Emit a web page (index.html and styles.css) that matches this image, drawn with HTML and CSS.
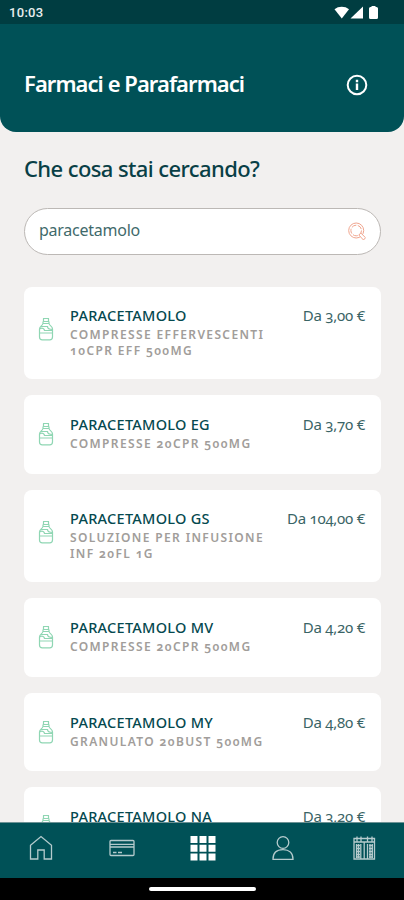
FILE: index.html
```html
<!DOCTYPE html>
<html lang="it">
<head>
<meta charset="utf-8">
<meta name="viewport" content="width=device-width, initial-scale=1">
<title>Farmaci e Parafarmaci</title>
<link rel="stylesheet" href="styles.css">
</head>
<body>
<svg width="0" height="0" class="defs" aria-hidden="true">
  <symbol id="bottle" viewBox="0 0 16 24">
    <path d="M5 1.500h6M5.500 1.500v3h5v-3M4.500 6.500h7M5 4.500v2C4.500 9 1.500 9 1.500 12v8c0 1.800 1 2.800 2.800 2.800h7.400c1.800 0 2.800-1 2.800-2.800v-8c0-3-3-3-3.500-5.500v-2M1.500 12c3-2 5 0 5 1.500h8M1.500 16h13M2.500 9.500h7c0 2 2 3 5 3"/>
  </symbol>
</svg>
<div class="phone">
  <div class="status">
    <span class="clock">10:03</span>
    <svg class="signals" width="46" height="16" viewBox="0 0 46 16" fill="#fff">
      <path d="M.5 4.200C4.500.9 11 .9 15 4.200L7.800 13.500z"/>
      <path d="M29 1.500v12H16.500z"/>
      <path d="M37.500 2v-1h4v1h1q1.500 0 1.500 1.500v9q0 1.500-1.500 1.500h-6q-1.500 0-1.500-1.500v-9q0-1.500 1.500-1.500z"/>
    </svg>
  </div>
  <header class="header">
    <h1>Farmaci e Parafarmaci</h1>
    <svg class="info" width="22" height="22" viewBox="0 0 22 22" fill="none" stroke="#fff">
      <circle cx="11" cy="11" r="9.300" stroke-width="2"/>
      <path d="M11 9.500v6.500M11 5.800v2.400" stroke-width="2.400"/>
    </svg>
  </header>
  <main class="content">
    <h2>Che cosa stai cercando?</h2>
    <div class="search">
      <span>paracetamolo</span>
      <svg width="18" height="19" viewBox="0 0 18 19" fill="none" stroke="#f0a58e" stroke-width="1">
        <circle cx="8.200" cy="8.500" r="7.500"/>
        <circle cx="8.200" cy="8.500" r="5.300" stroke-dasharray="5 1.500"/>
        <path d="M10.800 13l2-2 4.700 4.700-2 2.300z" fill="#fff"/>
      </svg>
    </div>
    <ul class="list">
      <li class="card tall"><svg class="bottle"><use href="#bottle"/></svg><div class="text"><h3>PARACETAMOLO</h3><p>COMPRESSE EFFERVESCENTI<br>10CPR EFF 500MG</p></div><span class="price">Da 3,00 €</span></li>
      <li class="card"><svg class="bottle"><use href="#bottle"/></svg><div class="text"><h3>PARACETAMOLO EG</h3><p>COMPRESSE 20CPR 500MG</p></div><span class="price">Da 3,70 €</span></li>
      <li class="card tall"><svg class="bottle"><use href="#bottle"/></svg><div class="text"><h3>PARACETAMOLO GS</h3><p>SOLUZIONE PER INFUSIONE<br>INF 20FL 1G</p></div><span class="price">Da 104,00 €</span></li>
      <li class="card"><svg class="bottle"><use href="#bottle"/></svg><div class="text"><h3>PARACETAMOLO MV</h3><p>COMPRESSE 20CPR 500MG</p></div><span class="price">Da 4,20 €</span></li>
      <li class="card"><svg class="bottle"><use href="#bottle"/></svg><div class="text"><h3>PARACETAMOLO MY</h3><p>GRANULATO 20BUST 500MG</p></div><span class="price">Da 4,80 €</span></li>
      <li class="card"><svg class="bottle"><use href="#bottle"/></svg><div class="text"><h3>PARACETAMOLO NA</h3></div><span class="price">Da 3,20 €</span></li>
    </ul>
  </main>
  <nav class="tabs">
    <svg width="26" height="26" viewBox="0 0 26 26"><path d="M2.500 24V10.200L13 1.500l10.500 8.700V24h-7.300v-9H9.800v9z"/></svg>
    <svg width="26" height="26" viewBox="0 0 26 26"><rect x="1" y="5.500" width="24" height="15" rx="1"/><path d="M1 9.300h24M1 12h24M4 17.500h3.500M9 17.500h4"/></svg>
    <svg class="grid" width="26" height="26" viewBox="0 0 26 26"><path d="M.5 1h7v7h-7zM9.500 1h7v7h-7zM18.500 1h7v7h-7zM.5 9.700h7v7h-7zM9.500 9.700h7v7h-7zM18.500 9.700h7v7h-7zM.5 18.400h7v7h-7zM9.500 18.400h7v7h-7zM18.500 18.400h7v7h-7z"/></svg>
    <svg width="26" height="26" viewBox="0 0 26 26"><circle cx="13" cy="7.500" r="5.800"/><path d="M3 24.300c0-6.500 4-9.600 10-9.600s10 3.100 10 9.600z"/></svg>
    <svg width="26" height="26" viewBox="0 0 26 26"><path d="M3 3.500h20.500V24H3zM3 7h20.500M6 1.500v5M10 1.500v5M16.500 1.500v5M21 1.500v5M9.800 9v15M13.200 7v17M16.500 9v15"/><path d="M5 10.500h4M5 13.500h4M5 16.500h4M5 19.500h4M5 22h4M18 10.500h4M18 13.500h4M18 16.500h4M18 19.500h4M18 22h4M5.500 9v14M7.500 9v14M19 9v14M21.300 9v14"/></svg>
  </nav>
  <div class="gesture"><i></i></div>
</div>
</body>
</html>
```
FILE: styles.css
```css
* { box-sizing: border-box; margin: 0; padding: 0; }
body { background: #f2f0ef; font-family: "Noto Sans", sans-serif; color: #05494f; overflow: hidden; }
.defs { display: none; }
.phone { height: 900px; display: flex; flex-direction: column; overflow: hidden; }
.status { height: 24px; flex: none; background: #003d41; display: flex; justify-content: space-between; padding: 0 24px 0 9px; }
.clock { font: 500 13px/25px Roboto, sans-serif; color: #e8eeee; letter-spacing: .3px; }
.signals { margin-top: 5px; }
.header { height: 108px; flex: none; background: #005157; border-radius: 0 0 16px 16px; display: flex; justify-content: space-between; padding: 43px 36px 0 24px; }
h1 { font: 600 22px/34px "Noto Sans", sans-serif; letter-spacing: -.95px; margin-top: -1px; color: #fff; white-space: nowrap; }
.info { margin-top: 7px; }
.content { flex: 1; min-height: 0; overflow: hidden; padding: 19px 23px 0 24px; }
h2 { font: 500 22px/34px "Noto Sans", sans-serif; letter-spacing: -.6px; color: #093f46; white-space: nowrap; }
.search { margin-top: 23px; height: 47px; border: 1px solid #bcb8b5; border-radius: 24px; background: #fff; display: flex; align-items: center; justify-content: space-between; padding: 0 14px; }
.search span { font-size: 16px; line-height: 20px; letter-spacing: -.25px; color: #3f6a6b; padding-bottom: 3px; }
.list { list-style: none; margin-top: 32px; display: flex; flex-direction: column; gap: 16px; font-variant-numeric: oldstyle-nums; }
.card { height: 78.400px; flex: none; background: #fff; border-radius: 8px; display: flex; padding: 19px 16px 0 14px; }
.card.tall { height: 92.400px; padding-top: 18px; }
.bottle { width: 16px; height: 24px; margin: 8px 16px 0 0; fill: none; stroke: #8fd6b3; stroke-width: 1.200; flex: none; }
.tall .bottle { margin-top: 12px; }
.text { flex: 1; white-space: nowrap; }
h3 { font-size: 14.500px; font-weight: 500; line-height: 20px; letter-spacing: .27px; color: #05494f; }
.card p { font-size: 12px; font-weight: 600; line-height: 16px; letter-spacing: 1.370px; color: #a19d9a; padding-top: 2px; }
.price { font-size: 15px; line-height: 20px; letter-spacing: -.25px; color: #3a6466; white-space: nowrap; }
.tabs { height: 56px; flex: none; background: #005157; border-top: 1px solid #6d9295; display: flex; justify-content: space-between; padding: 12px 27px 0 28px; }
.tabs svg { fill: none; stroke: #b5cbcd; stroke-width: 1.300; }
.tabs .grid { fill: #fff; stroke: none; }
.gesture { height: 22px; flex: none; background: #000; display: flex; justify-content: center; padding-top: 9px; }
.gesture i { width: 107px; height: 4px; border-radius: 2px; background: #fff; }
```
